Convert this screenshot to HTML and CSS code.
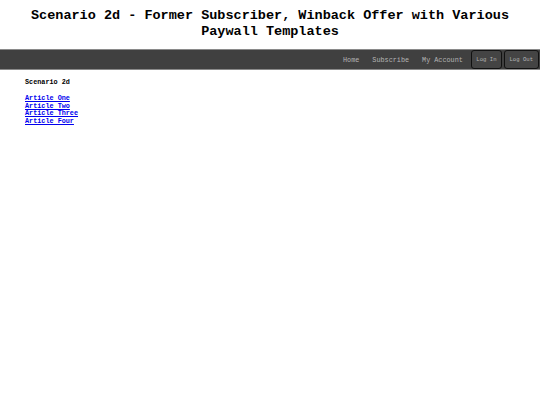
FILE: index.html
```html
<!DOCTYPE html>
<html lang="en">
<head>
    <meta charset="UTF-8"/>
    <title>Scenario 2d</title>
    <link rel="stylesheet" href="styles.css">
</head>
<body>

<h1 class="title">Scenario 2d - Former Subscriber, Winback Offer with Various Paywall Templates</h1>

<div class="navbar">
    <a href="#" class="nav-link">Home</a>
    <a href="#" class="nav-link">Subscribe</a>
    <a href="#" class="nav-link">My Account</a>
    <button class="nav-btn">Log In</button>
    <button class="nav-btn">Log Out</button>
</div>

<div class="content">
    <h2>Scenario 2d</h2>
    <ul class="articles">
        <li><a href="#">Article One</a></li>
        <li><a href="#">Article Two</a></li>
        <li><a href="#">Article Three</a></li>
        <li><a href="#">Article Four</a></li>
    </ul>
</div>

</body>
</html>
```

FILE: styles.css
```css
body {
  margin: 0;
  font-family: 'Liberation Mono', 'Courier New', monospace;
  background: #ffffff;
  color: #000000;
}

.title {
  margin: 0;
  padding: 8px 20px 9px;
  font-size: 13.5px;
  line-height: 16px;
  text-align: center;
  font-weight: bold;
}

.navbar {
  display: flex;
  justify-content: flex-end;
  align-items: center;
  height: 19px;
  padding-right: 1px;
  background: #404040;
  border-top: 1px solid #8a8a8a;
  border-bottom: 1px solid #8a8a8a;
}

.nav-link {
  color: #b4b4b4;
  text-decoration: none;
  font-size: 6.8px;
  padding: 0 6.5px;
}

.nav-btn {
  height: 19px;
  margin-left: 2px;
  padding: 0 4px;
  font-family: inherit;
  font-size: 5.6px;
  color: #b4b4b4;
  background: #444444;
  border: 1px solid #111111;
  border-radius: 3px;
}

.nav-btn:last-child {
  padding: 0 5px;
}

.content {
  padding: 8px 25px;
}

.content h2 {
  margin: 0 0 9px;
  font-size: 6.8px;
  line-height: 8px;
}

.articles {
  list-style: none;
  margin: 0;
  padding: 0;
}

.articles li {
  font-size: 6.8px;
  line-height: 7.5px;
  font-weight: bold;
}

.articles a {
  color: #0000ee;
}
```
